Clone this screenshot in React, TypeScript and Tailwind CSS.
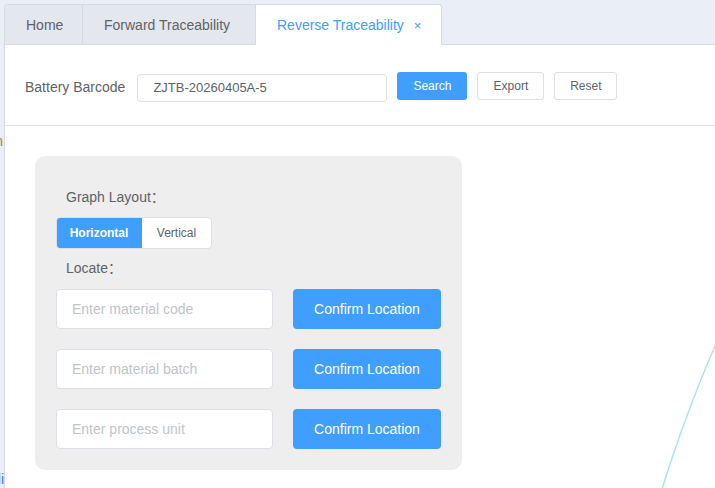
import React from 'react';

const font = { fontFamily: '"Liberation Sans", Arial, "Noto Sans CJK SC", sans-serif' };

function Tab({ label, width, active, closable }: { label: string; width: string; active?: boolean; closable?: boolean }) {
  return (
    <div
      className={`${width} h-[40px] flex items-center pt-[2px] pl-[21px] text-[14px] border-r border-[#d5dae3] last:border-r-0 ${
        active ? 'bg-white text-[#409eff] border-b border-b-white' : 'bg-[#e4e8ee] text-[#606266] border-b border-b-[#d5dae3]'
      }`}
    >
      {label}
      {closable && <span className="ml-[10px] text-[13px] text-[#409eff]">×</span>}
    </div>
  );
}

function LocateRow({ placeholder }: { placeholder: string }) {
  return (
    <div className="flex items-center gap-[20px]">
      <input
        placeholder={placeholder}
        className="w-[217px] h-[40px] bg-white border border-[#dcdfe6] rounded-[4px] px-[15px] text-[14px] text-[#606266] placeholder:text-[#c0c4cc] outline-none"
      />
      <button className="w-[148px] h-[40px] bg-[#409eff] rounded-[4px] text-white text-[14px]">Confirm Location</button>
    </div>
  );
}

export default function App() {
  return (
    <div className="w-[715px] h-[488px] bg-[#eaeef6] flex overflow-hidden" style={font}>
      {/* sidebar leftovers */}
      <div className="w-[4px] relative overflow-hidden">
        <span className="absolute top-[131px] right-[1px] text-[14px] text-[#b07a4f]">n</span>
        <span className="absolute top-[469px] right-[0px] text-[14px] text-[#4d6bfe]">li</span>
      </div>

      <div className="flex-1 flex flex-col">
        {/* tabs */}
        <div className="pt-[4px] flex">
          <div className="flex border border-[#d5dae3] border-b-0 rounded-tl-[4px] rounded-tr-[4px] overflow-hidden -mb-px relative z-10">
            <Tab label="Home" width="w-[78px]" />
            <Tab label="Forward Traceability" width="w-[173px]" />
            <Tab label="Reverse Traceability" width="w-[185px]" active closable />
          </div>
        </div>

        <div className="flex-1 bg-white border-t border-l border-[#d5dae3] flex flex-col relative">
          {/* filter row */}
          <div className="h-[81px] flex items-center pl-[20px] border-b border-[#dcdfe6]">
            <span className="mt-[4px] text-[14px] text-[#606266] mr-[12px]">Battery Barcode</span>
            <input
              defaultValue="ZJTB-20260405A-5"
              className="mt-[5px] w-[250px] h-[28px] border border-[#dcdfe6] rounded-[4px] px-[15px] text-[13px] text-[#606266] outline-none"
            />
            <button className="ml-[10px] mt-[2px] w-[70px] h-[28px] bg-[#409eff] text-white text-[12px] rounded-[3px]">Search</button>
            <button className="ml-[10px] mt-[2px] w-[67px] h-[28px] bg-white border border-[#dcdfe6] text-[#606266] text-[12px] rounded-[3px]">Export</button>
            <button className="ml-[10px] mt-[2px] w-[63px] h-[28px] bg-white border border-[#dcdfe6] text-[#606266] text-[12px] rounded-[3px]">Reset</button>
          </div>

          {/* canvas area */}
          <div className="flex-1 pl-[30px] pt-[30px]">
            <div className="w-[427px] h-[314px] bg-[#eeeeee] rounded-[10px] pl-[21px] pt-[30px]">
              <div className="pl-[10px] text-[14px] text-[#606266] leading-[22px]">Graph Layout：</div>
              <div className="mt-[9px] flex w-[156px] h-[32px] rounded-[4px] overflow-hidden border border-[#dcdfe6] bg-white">
                <div className="w-[86px] -ml-px -my-px bg-[#409eff] text-white text-[12px] font-bold flex items-center justify-center rounded-l-[4px]">Horizontal</div>
                <div className="flex-1 text-[#606266] text-[12px] flex items-center justify-center">Vertical</div>
              </div>
              <div className="mt-[8px] pl-[10px] text-[14px] text-[#606266] leading-[22px]">Locate：</div>
              <div className="mt-[10px] flex flex-col gap-[20px]">
                <LocateRow placeholder="Enter material code" />
                <LocateRow placeholder="Enter material batch" />
                <LocateRow placeholder="Enter process unit" />
              </div>
            </div>
          </div>

          {/* graph edge */}
          <svg className="absolute left-0 top-0 pointer-events-none" width="711" height="444" viewBox="0 0 711 444">
            <path d="M711 299 Q683 362 657 444" fill="none" stroke="#a6e5ea" strokeWidth="1.5" />
          </svg>
        </div>
      </div>
    </div>
  );
}
